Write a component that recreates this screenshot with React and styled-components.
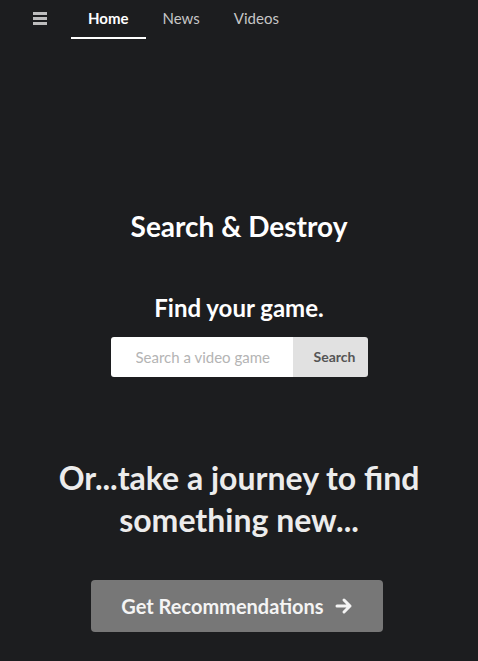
import React from 'react'
import styled, {createGlobalStyle} from 'styled-components'

const GlobalStyle = createGlobalStyle`
    html, body {
        margin: 0;
        padding: 0;
        background: #1c1d1f;
    }
    body {
        font-family: Lato, "Open Sans", sans-serif;
        color: #fff;
    }
`

const Page = styled.div`
    min-height: 661px;
    background: #1c1d1f;
`

const Nav = styled.div`
    display: flex;
    align-items: stretch;
    height: 40px;
    padding-left: 33px;
`

const Burger = styled.div`
    width: 14px;
    display: flex;
    flex-direction: column;
    justify-content: center;
    gap: 2px;
    margin: 0 24px 4px 0;
    span {
        display: block;
        height: 3px;
        background: #bdbdbd;
    }
`

const Tab = styled.div`
    padding: 0 17px;
    font-size: 15px;
    font-weight: ${p => p.active ? 700 : 400};
    color: ${p => p.active ? '#fff' : '#c6c6c6'};
    line-height: 36px;
    border-bottom: 2px solid ${p => p.active ? '#fff' : 'transparent'};
    margin-bottom: 1px;
`

const Main = styled.div`
    display: flex;
    flex-direction: column;
    align-items: center;
    text-align: center;
`

const Title = styled.h1`
    margin: 168px 0 0;
    font-size: 28px;
    font-weight: 700;
    line-height: 36px;
`

const Sub = styled.h2`
    margin: 49px 0 0;
    font-size: 24px;
    font-weight: 700;
    line-height: 30px;
`

const SearchBox = styled.div`
    display: flex;
    margin-top: 14px;
    height: 40px;
    width: 257px;
    border-radius: 3px;
    overflow: hidden;
`

const SearchInput = styled.input`
    flex: 1;
    min-width: 0;
    border: none;
    outline: none;
    padding: 0 0 0 25px;
    font-family: Lato, sans-serif;
    font-size: 15px;
    color: #333;
    background: #fff;
    &::placeholder {
        color: #b4b4b4;
    }
`

const SearchBt = styled.div`
    width: 75px;
    box-sizing: border-box;
    padding-left: 21px;
    text-align: left;
    background: #e1e1e1;
    color: #555;
    font-size: 14px;
    font-weight: 700;
    line-height: 40px;
`

const Journey = styled.h2`
    margin: 80px 0 0;
    font-size: 32px;
    font-weight: 700;
    line-height: 42px;
    color: #ececec;
`

const RecBt = styled.div`
    margin-top: 39px;
    width: 292px;
    height: 52px;
    display: flex;
    align-items: center;
    justify-content: center;
    gap: 11px;
    background: #777;
    border-radius: 4px;
    font-size: 20px;
    font-weight: 700;
    color: #f4f4f4;
    transform: translateX(-2px);
`

export default function App() {
    return <Page>
        <GlobalStyle/>
        <Nav>
            <Burger><span/><span/><span/></Burger>
            <Tab active>Home</Tab>
            <Tab>News</Tab>
            <Tab>Videos</Tab>
        </Nav>
        <Main>
            <Title>Search &amp; Destroy</Title>
            <Sub>Find your game.</Sub>
            <SearchBox>
                <SearchInput placeholder="Search a video game"/>
                <SearchBt>Search</SearchBt>
            </SearchBox>
            <Journey>Or...take a journey to find<br/>something new...</Journey>
            <RecBt>
                Get Recommendations
                <svg width="18" height="18" viewBox="0 0 18 18" fill="none" stroke="#f4f4f4" strokeWidth="3" strokeLinecap="round" strokeLinejoin="round">
                    <path d="M2 9h13M9 3l6 6-6 6"/>
                </svg>
            </RecBt>
        </Main>
    </Page>
}
